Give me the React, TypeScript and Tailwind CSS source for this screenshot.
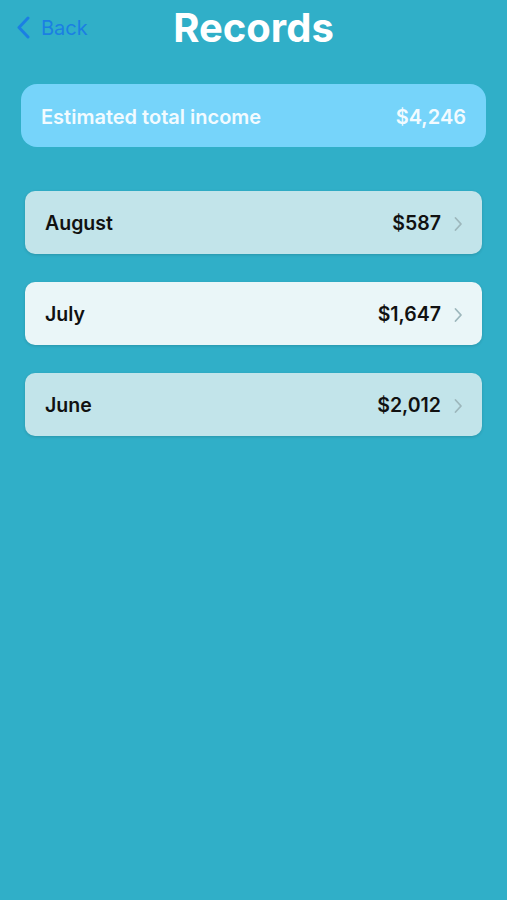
import React from "react";

const rows = [
  { name: "August", amount: "$587", bg: "bg-[#c2e4ea]" },
  { name: "July", amount: "$1,647", bg: "bg-[#eaf6f8]" },
  { name: "June", amount: "$2,012", bg: "bg-[#c2e4ea]" },
];

function Chevron() {
  return (
    <svg width="10" height="16" viewBox="0 0 10 16" fill="none">
      <path d="M2.5 2l5.5 6-5.5 6" stroke="#9db7bc" strokeWidth="1.8" strokeLinecap="round" strokeLinejoin="round" />
    </svg>
  );
}

export default function App() {
  return (
    <div
      className="w-[507px] h-[900px] bg-[#30afc8] flex flex-col"
      style={{ fontFamily: "Inter, 'Liberation Sans', sans-serif" }}
    >
      <div className="relative h-[56px] flex items-center justify-center">
        <div className="absolute left-[16px] top-[16px] flex items-center gap-[10px] text-[#1b7fe3]">
          <svg width="15" height="23" viewBox="0 0 15 23" fill="none">
            <path d="M12 2L3 11.5L12 21" stroke="#1b7fe3" strokeWidth="3" strokeLinecap="round" strokeLinejoin="round" />
          </svg>
          <span className="text-[20px] leading-none">Back</span>
        </div>
        <h1 className="text-white font-bold text-[40px] leading-none mt-[-1px]">Records</h1>
      </div>

      <div className="mx-[21px] mt-[28px] h-[63px] rounded-[16px] bg-[#76d4fa] flex items-center justify-between px-[20px] pt-[3px] text-[#f2fbff]">
        <span className="text-[20px] font-semibold">Estimated total income</span>
        <span className="text-[20px] font-semibold">$4,246</span>
      </div>

      <div className="mt-[44px] mx-[25px] flex flex-col gap-[28px]">
        {rows.map((r) => (
          <div
            key={r.name}
            className={`h-[63px] rounded-[10px] ${r.bg} shadow-[0_1px_3px_rgba(0,0,0,0.15)] flex items-center pl-[20px] pr-[19px] pt-[3px]`}
          >
            <span className="text-[19.5px] font-semibold text-[#111]">{r.name}</span>
            <span className="ml-auto text-[19.5px] font-semibold text-[#111]">{r.amount}</span>
            <span className="ml-[12px] flex items-center">
              <Chevron />
            </span>
          </div>
        ))}
      </div>
    </div>
  );
}
